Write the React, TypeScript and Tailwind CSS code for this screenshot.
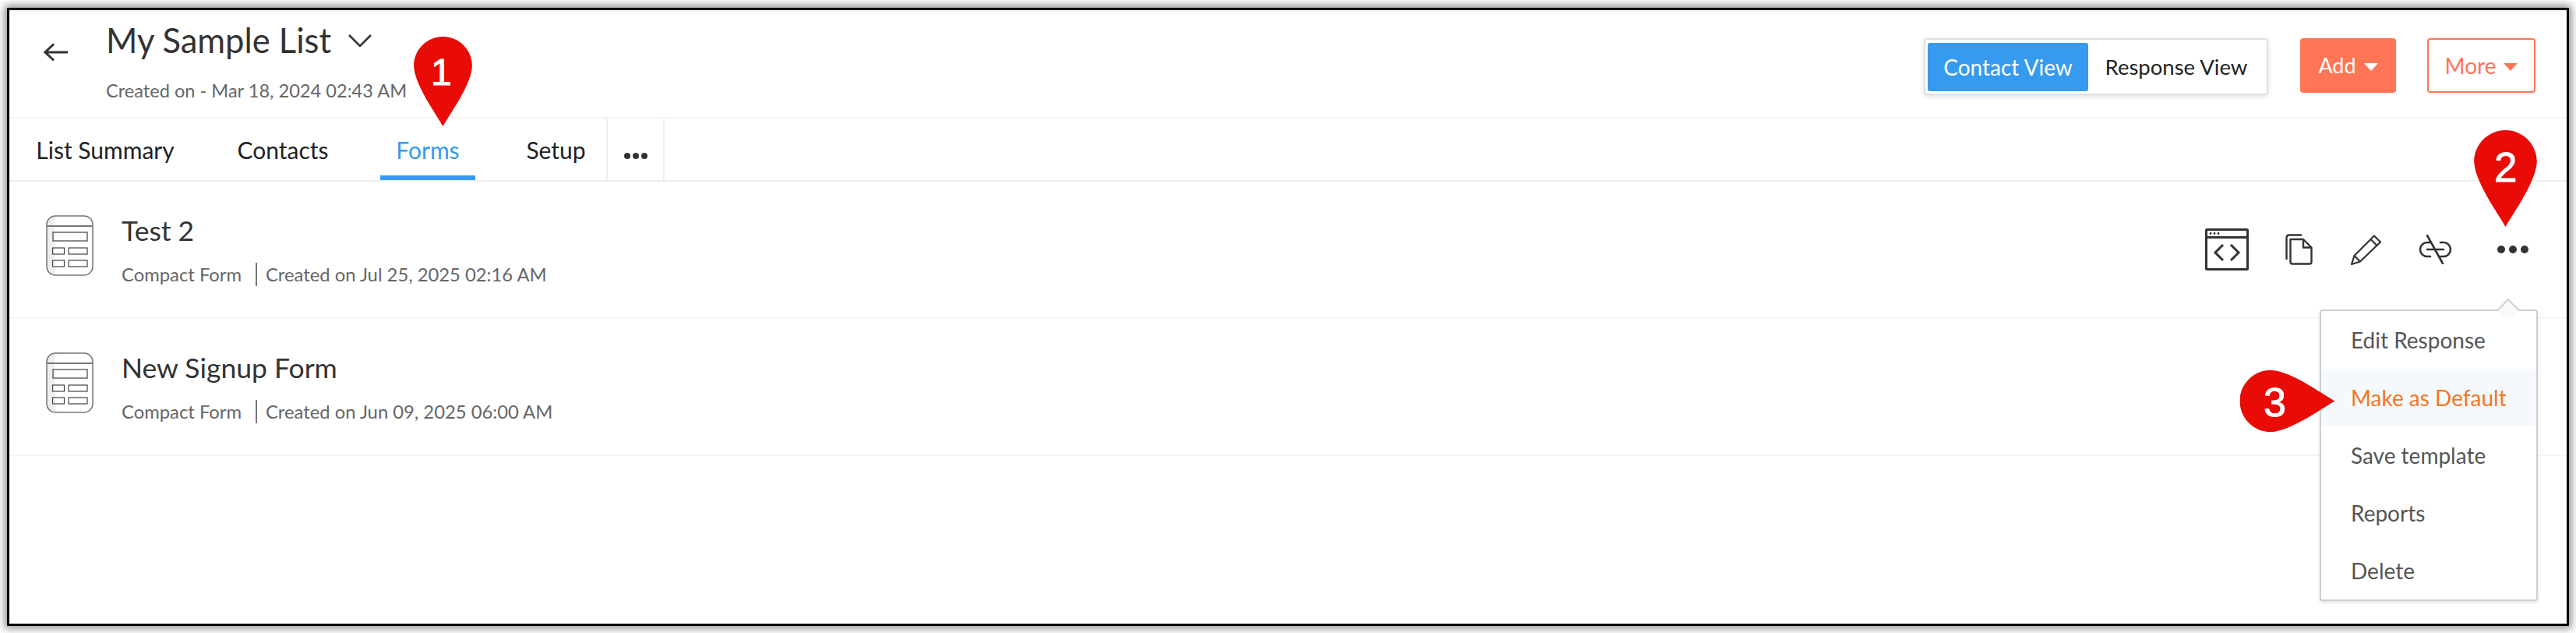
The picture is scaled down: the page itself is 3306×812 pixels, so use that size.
const FORMS = [
  { name: "Test 2", created: "Created on Jul 25, 2025 02:16 AM", actions: true },
  { name: "New Signup Form", created: "Created on Jun 09, 2025 06:00 AM", actions: false },
];

const MENU = ["Edit Response", "Make as Default", "Save template", "Reports", "Delete"];

function FormIcon() {
  return (
    <svg viewBox="0 0 61 78" className="h-[78px] w-[61px] shrink-0" fill="none">
      <path d="M12 1C5 1 1 5 1 12v54c0 7 4 11 11 11h6c-5-1-7-5-7-11V12c0-6 2-10 7-11z" fill="#eeeeee" />
      <rect x="1" y="1" width="59" height="76" rx="11" stroke="#777" strokeWidth="1.5" />
      <path d="M1 14h59" stroke="#777" strokeWidth="2" />
      <rect x="9" y="22" width="44" height="11" stroke="#666" strokeWidth="1.5" />
      <rect x="8.500" y="42" width="15" height="8" stroke="#444" strokeWidth="1.2" />
      <rect x="29" y="42" width="24" height="8" stroke="#444" strokeWidth="1.2" />
      <rect x="8.500" y="58" width="15" height="8" stroke="#444" strokeWidth="1.2" />
      <rect x="29" y="58" width="24" height="8" stroke="#444" strokeWidth="1.2" />
    </svg>
  );
}

function RowActions() {
  return (
    <div className="mt-[17px] flex items-center text-[#333]">
      <svg viewBox="0 0 56 54" className="h-[54px] w-[56px]" fill="none" stroke="currentColor">
        <rect x="1.500" y="1.500" width="53" height="51" rx="1" strokeWidth="3" />
        <path d="M1.500 11.500h53" strokeWidth="3" />
        <circle cx="7" cy="6.500" r="1.400" fill="currentColor" stroke="none" />
        <circle cx="12" cy="6.500" r="1.400" fill="currentColor" stroke="none" />
        <circle cx="17" cy="6.500" r="1.400" fill="currentColor" stroke="none" />
        <path d="M23 21 13 31l10 10M33 21l10 10-10 10" strokeWidth="3" />
      </svg>
      <svg viewBox="0 0 35 40" className="ml-[47px] h-[40px] w-[35px]" fill="none" stroke="currentColor" strokeWidth="2.4">
        <path d="M21 1.500H5Q1.500 1.500 1.500 5v28" />
        <path d="M6.500 7H23l10.500 10.500V36q0 2.500-2.500 2.500H9q-2.500 0-2.500-2.500z" strokeLinejoin="round" />
        <path d="M23 7v10.500h10.500" strokeLinejoin="round" />
      </svg>
      <svg viewBox="0 0 39 39" className="ml-[49px] h-[39px] w-[39px]" fill="none" stroke="currentColor" strokeWidth="2.2" strokeLinejoin="round">
        <path d="M1 38 4.500 27 30 1.500l8 8L12 34.500z" />
        <path d="m4.500 27 7.500 7.500M25.500 6l8 8" />
      </svg>
      <svg viewBox="0 0 43 38" className="ml-[48px] h-[38px] w-[43px]" fill="none" stroke="currentColor" strokeWidth="2.6" strokeLinecap="round">
        <path d="M15 10H11a9 9 0 0 0 0 18h4M28 10h4a9 9 0 0 1 0 18h-4M11 19h21" />
        <path d="m11 1 20 36" />
      </svg>
      <div className="ml-[58px] flex gap-[5px]">
        <span className="size-[10px] rounded-full bg-[#333]" />
        <span className="size-[10px] rounded-full bg-[#333]" />
        <span className="size-[10px] rounded-full bg-[#333]" />
      </div>
    </div>
  );
}

// red callout marker, number sits in the round end
function Pin({ n, className, sideways }: { n: string; className: string; sideways?: boolean }) {
  return (
    <div className={`absolute ${className}`}>
      <svg
        viewBox="0 0 80 124"
        className={sideways ? "absolute left-[21.5px] top-[-21.5px] h-[123px] w-[80px] -rotate-90" : "size-full"}
      >
        <path d="M40 123C30 105 1 66 0 40 0 18 18 0 40 0s40 18 40 40c-1 26-30 65-40 83z" fill="#e90b05" />
      </svg>
      <span className="absolute font-['Liberation_Sans',sans-serif] leading-none text-white [-webkit-text-stroke:1px_white]">
        {n}
      </span>
    </div>
  );
}

export default function App() {
  return (
    <div className="h-[812px] w-[3306px] overflow-hidden bg-white pl-[9px] pt-[10px] font-['Lato',sans-serif]">
      <div className="relative h-[793px] w-[3288px] border-[3px] border-black bg-white shadow-[0_0_10px_3px_rgba(0,0,0,0.45)]">
        {/* Header */}
        <header className="flex h-[139px] items-start justify-between border-y-2 border-[#f1f4f8] pr-[40px]">
          <div className="flex">
            <svg viewBox="0 0 31 24" className="ml-[44px] mt-[40px] h-[24px] w-[31px]" fill="none" stroke="#333" strokeWidth="3">
              <path d="M2 12h29M13 1.500 2 12l11 10.500" />
            </svg>
            <div className="ml-[49px] pt-[9px]">
              <div className="flex items-center">
                <span className="text-[43.5px] leading-[54px] text-[#333]">My Sample List</span>
                <svg viewBox="0 0 30 17" className="ml-[22px] mt-[2px] h-[17px] w-[30px]" fill="none" stroke="#333" strokeWidth="2.6">
                  <path d="m1 1 14 14L29 1" />
                </svg>
              </div>
              <div className="mt-[23px] text-[23.6px] leading-[30px] text-[#666]">Created on - Mar 18, 2024 02:43 AM</div>
            </div>
          </div>
          <div className="mt-[34px] flex items-start">
            <div className="flex h-[73px] w-[442px] rounded-[4px] border-2 border-[#dde1e6] bg-white px-[3px] py-[4px] shadow-[0_2px_6px_rgba(0,0,0,0.12)]">
              <div className="flex h-[62px] w-[206px] items-center justify-center rounded-[3px] bg-[#369bef] text-[28px] text-white">Contact View</div>
              <div className="flex flex-1 items-center justify-center text-[27.5px] text-[#222]">Response View</div>
            </div>
            <button className="ml-[41px] flex h-[70px] w-[123px] items-center justify-center gap-[10px] rounded-[4px] bg-[#ff7555] text-[27px] text-white">
              Add <span className="mt-[3px] border-x-[9px] border-t-[10px] border-x-transparent border-t-white" />
            </button>
            <button className="ml-[40px] flex h-[70px] w-[139px] items-center justify-center gap-[10px] rounded-[4px] border-2 border-[#ff7555] bg-white text-[28px] text-[#ff7555]">
              More <span className="mt-[3px] border-x-[9px] border-t-[10px] border-x-transparent border-t-[#ff7555]" />
            </button>
          </div>
        </header>

        {/* Tabs */}
        <nav className="flex h-[81px] border-b-2 border-[#eeeeee] pl-[34px] text-[30px] text-[#222]">
          <div className="flex w-[178px] items-center justify-center pt-[2px]">List Summary</div>
          <div className="ml-[80px] flex w-[118px] items-center justify-center pt-[2px]">Contacts</div>
          <div className="ml-[66px] flex h-[79px] w-[122px] items-center justify-center border-b-[6px] border-[#369bef] pt-[8px] text-[#369bef]">Forms</div>
          <div className="ml-[65px] flex w-[77px] items-center justify-center pt-[2px]">Setup</div>
          <div className="ml-[26px] flex w-[75px] items-center justify-center gap-[3px] border-x-2 border-[#eeeeee] pt-[16px]">
            <span className="size-[8px] rounded-full bg-[#333]" />
            <span className="size-[8px] rounded-full bg-[#333]" />
            <span className="size-[8px] rounded-full bg-[#333]" />
          </div>
        </nav>

        {/* Form rows */}
        {FORMS.map((form) => (
          <div key={form.name} className="flex h-[176px] items-start border-b-2 border-[#f5f5f5] pl-[47px] pr-[49px] pt-[43px]">
            <FormIcon />
            <div className="ml-[36px] mt-[-2px] flex-1">
              <div className="text-[35.5px] leading-[44px] text-[#333]">{form.name}</div>
              <div className="mt-[19px] flex items-center text-[23.8px] leading-[30px] text-[#666]">
                Compact Form
                <span className="ml-[18px] mr-[11px] h-[30px] w-[2px] bg-[#777]" />
                {form.created}
              </div>
            </div>
            {form.actions && <RowActions />}
          </div>
        ))}

        {/* Row menu */}
        <div className="absolute left-[2965px] top-[384px] w-[280px] rounded-[4px] border-2 border-[#cfcfcf] bg-white shadow-[0_2px_4px_rgba(0,0,0,0.12)]">
          <span className="absolute left-[230px] top-[-12px] size-[20px] rotate-45 border-l-2 border-t-2 border-[#cfcfcf] bg-[#fafafa]" />
          {MENU.map((item) => (
            <div
              key={item}
              className={`relative flex h-[74px] items-center pl-[38px] text-[28px] ${
                item === "Make as Default" ? "bg-[#f5f9fd] text-[#f2761e]" : "text-[#555]"
              }`}
            >
              {item}
            </div>
          ))}
        </div>

        {/* Callouts */}
        <Pin n="1" className="left-[519px] top-[34px] h-[116px] w-[75px] text-[48px] [&>span]:left-[22px] [&>span]:top-[22px]" />
        <Pin n="2" className="left-[3163px] top-[154px] h-[125px] w-[81px] text-[53px] [&>span]:left-[26px] [&>span]:top-[21px]" />
        <Pin n="3" sideways className="left-[2862px] top-[461px] h-[80px] w-[123px] text-[52px] [&>span]:left-[31px] [&>span]:top-[16px]" />
      </div>
    </div>
  );
}
